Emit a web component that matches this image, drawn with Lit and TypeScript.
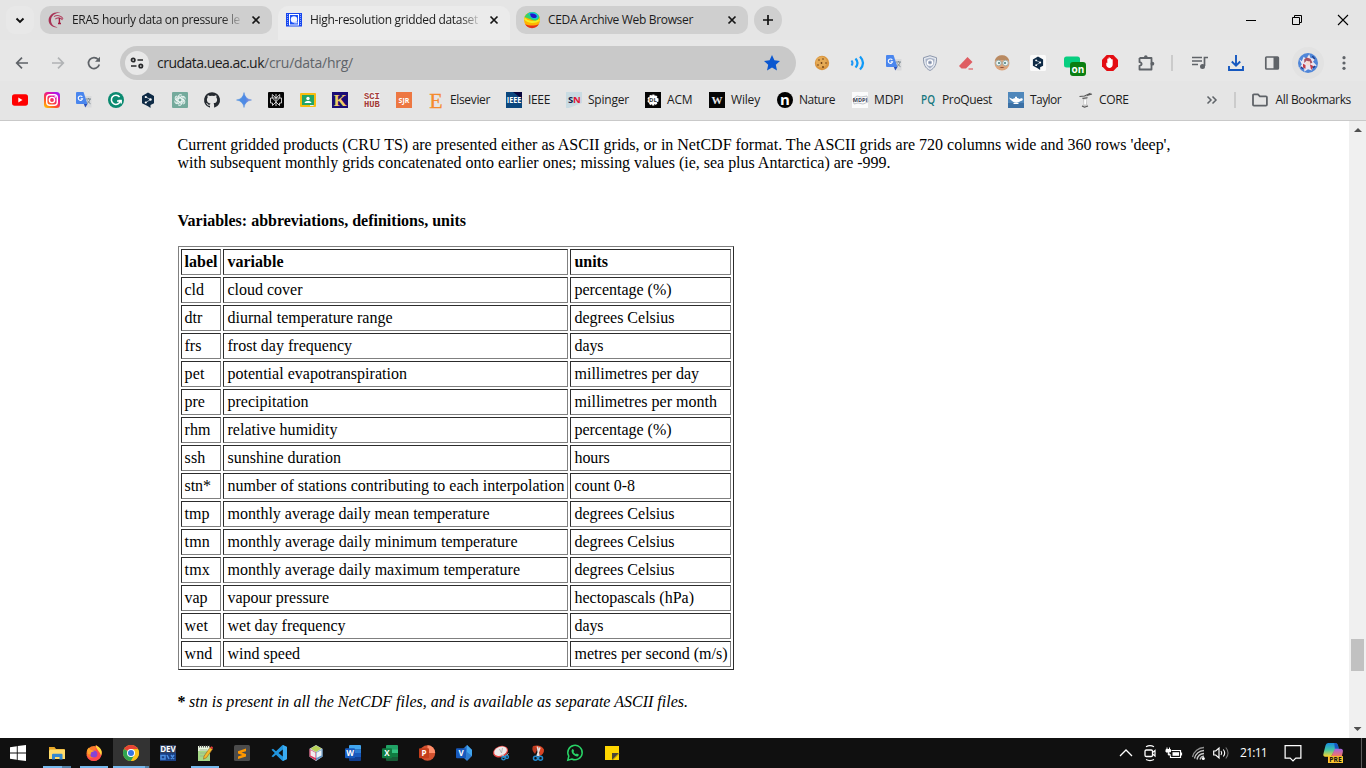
import { LitElement, html, svg, css, TemplateResult } from "lit";
import { customElement, property } from "lit/decorators.js";

type Glyph = TemplateResult;

const letter = (t: string, x: number, y: number, size: number, fill: string, extra = "sans") =>
  svg`<text x=${x} y=${y} font-size=${size} fill=${fill} font-weight="700" text-anchor="middle"
    font-family=${extra === "serif" ? "Liberation Serif, serif" : "Open Sans, sans-serif"}>${t}</text>`;

const translate = svg`<path d="M6 4h9.500v11.500h-5z" fill="#d9dadc"/>
  <path d="M1 0h6.500l4 12H1a1 1 0 0 1-1-1V1a1 1 0 0 1 1-1z" fill="#4a86ee"/><path d="M7.800 12h3.700l-2.200 3.500z" fill="#2a50b8"/>
  <path d="M6.300 4.900A2.200 2.200 0 1 0 6.600 6.700H4.700" fill="none" stroke="#fff" stroke-width="1.100"/>
  <path d="M10 7h5M12.500 6v1M14 7c-.4 2-1.500 3.500-3 4.500M11.500 8.500c.7 1.500 1.700 2.500 3 3.200" fill="none" stroke="#7c8a92" stroke-width="1"/>`;

const hex = svg`<path d="M8 .5l6 3.500v7.200L10.500 13v3L8 14.300 2 11.200V4z" fill="#0f2b46"/>
  <path d="M5.800 5l4.700 2.500-4.700 3M5.800 5v1" fill="none" stroke="#c8d3dc" stroke-width=".8"/>
  <circle cx="5.800" cy="5" r="1.100" fill="#fff"/><circle cx="10.500" cy="7.500" r="1.200" fill="#fff"/><circle cx="5.800" cy="10.500" r="1.100" fill="#fff"/>`;

const office = (l: string, a: string, b: string, c: string, d: string) => svg`
  <path d="M5 0h10a1 1 0 0 1 1 1v3.500H4V1a1 1 0 0 1 1-1z" fill=${a}/><path d="M4 4.200h12V8H4z" fill=${b}/>
  <path d="M4 8h12v4H4z" fill=${c}/><path d="M4 12h12v3a1 1 0 0 1-1 1H5a1 1 0 0 1-1-1z" fill=${d}/>
  <rect x="0" y="3.300" width="10" height="10" rx="1" fill=${c}/>${letter(l, 5, 11.300, 8, "#fff")}`;

const icons: Record<string, Glyph> = {
  chevronDown: svg`<path d="M4.500 6.500L8 10l3.500-3.500" fill="none" stroke="#111" stroke-width="1.900"/>`,
  era: svg`<path d="M12.500 .6C6-.8 .8 3 .6 8c-.1 4 3.400 8 9.400 7.300-4-.3-7-3-7-7C3 4 7 .8 12.500 .6z" fill="#a83355"/>
    <path d="M6 4.600c2.800-2 7.600-1.200 9 2.200M7.300 7.200c1.600-1.800 5.400-2 7.200 .8" fill="none" stroke="#b24562" stroke-width="1.100"/>
    <path d="M11.400 6v5.500M10 11.500h3" fill="none" stroke="#a21c42" stroke-width="1.400"/>`,
  cru: svg`<path d="M0 1h16v13.500H0z" fill="#1746ee"/><path d="M1.500 2v12M14.500 2v12" stroke="#8ca9ff" stroke-width="1" stroke-dasharray="1 1"/>
    <path d="M3 2h10v11.500H3z" fill="#fff"/><path d="M4 3h8v9.500H4z" fill="#1a50f4"/><circle cx="8" cy="7.500" r="3.200" fill="#f4f6ff"/><path d="M9 9.500h2.500v2H8z" fill="#c9d6ff"/>`,
  ceda: svg`<circle cx="8" cy="8" r="8" fill="#ffb400"/><path d="M2 2.800A8 8 0 0 1 15.500 5C14 10 10 9 7 7.500L.5 5z" fill="#36d36a"/>
    <path d="M4 1.500c4-2.500 9-1 10.500 2.500-1 4-4 3.500-7 2z" fill="#12c3df"/><path d="M6 1.800c3-1 6 .2 6.800 2.400-1 3-4 2-6 .3z" fill="#2114c8"/>
    <path d="M1 12c4 2 10 2 14 0A8 8 0 0 1 1 12z" fill="#e5301c"/><path d="M.5 6.500C4 11 11 11 15.500 8" fill="none" stroke="#f5ef21" stroke-width="2"/>`,
  close: svg`<path d="M4.500 4.500l7 7M11.500 4.500l-7 7" stroke="#161616" stroke-width="1.700"/>`,
  plus: svg`<path d="M8 3v10M3 8h10" stroke="#111" stroke-width="1.700"/>`,
  min: svg`<path d="M3 8.500h10" stroke="#000"/>`,
  restore: svg`<path d="M3.500 5.500h7v7h-7zM5.500 5.500v-2h7v7h-2" fill="none" stroke="#000"/>`,
  closeWin: svg`<path d="M3 3l10 10M13 3L3 13" stroke="#000" stroke-width="1.100"/>`,
  back: svg`<path d="M14 8H3M8 2.700L2.700 8 8 13.300" fill="none" stroke="#5f6368" stroke-width="1.700"/>`,
  forward: svg`<path d="M2 8h11M8 2.700L13.300 8 8 13.300" fill="none" stroke="#b1b3b5" stroke-width="1.700"/>`,
  reload: svg`<path d="M13.300 9.500A5.500 5.500 0 1 1 12.200 4.500" fill="none" stroke="#5f6368" stroke-width="1.700"/><path d="M14 1.800v5H9z" fill="#5f6368"/>`,
  tune: svg`<g fill="none" stroke="#27282a" stroke-width="1.700"><circle cx="4.200" cy="5" r="1.700"/><path d="M8.500 5h5.500M2 11h5.500"/><circle cx="11.800" cy="11" r="1.700"/></g>`,
  star: svg`<path d="M8 0l2.400 5.300 5.600.6-4.200 3.900L13 15.500 8 12.600 3 15.500l1.200-5.700L0 5.900l5.600-.6z" fill="#0b57d0"/>`,
  cookie: svg`<circle cx="8" cy="8" r="7.200" fill="#d9953f"/><circle cx="7.300" cy="7" r="5.500" fill="#e5aa55"/><g fill="#6c3d13"><circle cx="5" cy="5" r=".8"/><circle cx="9" cy="4" r=".8"/><circle cx="7.500" cy="8" r=".9"/><circle cx="12" cy="8" r=".8"/><circle cx="4" cy="10" r=".8"/><circle cx="9" cy="12" r=".9"/></g>`,
  sound: svg`<path d="M1.500 5.500q2 2.500 0 5" fill="none" stroke="#2196f3" stroke-width="2"/><path d="M5.500 3.500q4 4.500 0 9M10 1.500q6 6.500 0 13" fill="none" stroke="#109af7" stroke-width="2.200"/>`,
  translate,
  shield: svg`<path d="M8 .7l6.500 2c.3 6-1.500 10.500-6.500 12.800C3 13.200 1.200 8.700 1.500 2.700z" fill="#e4e8ef" stroke="#8d98ad"/><path d="M8 2.700l4.500 1.400c0 4.500-1 7.500-4.500 9.300-3.500-1.800-4.500-4.800-4.500-9.300z" fill="#a9b3c7"/><circle cx="8" cy="7.500" r="2.700" fill="none" stroke="#fff" stroke-width="1.300"/><circle cx="8" cy="7.500" r="1" fill="#7e8ba7"/>`,
  eraser: svg`<path d="M9.500 2L14.500 7 8 13.500H3.500L1 11z" fill="#df5d62"/><path d="M10.500 14h4.500" stroke="#df5d62" stroke-width="1.200"/>`,
  face: svg`<circle cx="8" cy="8" r="7.500" fill="#dca57c"/><path d="M.7 6A7.500 7.500 0 0 1 15.300 6l-2-1H3z" fill="#b98a62"/><circle cx="4.500" cy="8" r="2.800" fill="#e9f4f3" stroke="#8fa3a3" stroke-width=".8"/><circle cx="11.500" cy="8" r="2.800" fill="#e9f4f3" stroke="#8fa3a3" stroke-width=".8"/><circle cx="5" cy="8" r="1" fill="#437b7b"/><circle cx="11" cy="8" r="1" fill="#437b7b"/><path d="M5.500 13q2.500-2 5 0z" fill="#8c4a35"/>`,
  hexBox: svg`<rect width="16" height="16" rx="1.500" fill="#fafafa"/><g transform="translate(1.200 1) scale(.85 .87)">${hex}</g>`,
  hex,
  on: svg`<rect x="-2" y="1.500" width="16" height="11" rx="2.500" fill="#07ce80"/><rect x="4" y="7" width="16" height="14" rx="3" fill="#0a7f12"/>${letter("on", 12, 17.500, 10, "#fff")}`,
  adblock: svg`<path d="M4.700 0h6.600L16 4.700v6.600L11.300 16H4.700L0 11.300V4.700z" fill="#e40d13"/><path d="M4.300 7.500l1 .8V4.200c0-1 1.200-1 1.200 0V3c0-1 1.300-1 1.300 0v.7c0-1 1.300-1 1.300 0v1c.1-.9 1.600-.8 1.600.2v4.600c0 4-5.200 4.600-6.400 1z" fill="#fff"/>`,
  puzzle: svg`<path d="M1.500 3h12v4.500M13.500 9v5.500h-12v-3.700c2.800-.4 2.800-3.200 0-3.600V3M13.500 7v4" fill="none" stroke="#5f6368" stroke-width="1.800" stroke-linejoin="round"/><circle cx="7.800" cy="2" r="1.800" fill="#5f6368"/><circle cx="14.400" cy="8.700" r="1.900" fill="#5f6368"/>`,
  music: svg`<path d="M0 2.500h10M0 6h10M0 9.500h6" stroke="#5f6368" stroke-width="1.600"/><path d="M12.500 11V2.500H16" fill="none" stroke="#5f6368" stroke-width="1.700"/><circle cx="10.500" cy="11.500" r="2.500" fill="#5f6368"/>`,
  download: svg`<path d="M8 0v11M3.800 6.500L8 10.700l4.200-4.200M1 11v4h14v-4" fill="none" stroke="#1558c0" stroke-width="1.900"/>`,
  panel: svg`<rect x="1.800" y="2" width="12.500" height="12" rx=".8" fill="none" stroke="#5f6368" stroke-width="1.700"/><path d="M9.500 2h5v12h-5z" fill="#5f6368"/>`,
  avatar: svg`<circle cx="8" cy="8" r="8" fill="#4f86d8"/><path d="M1 5l2 1.500L4.500 3l2 1.500L9 1l1 3 4 .5-2 2.500 3 3-3 1-1 3-3-1-3 2 0-3-4 0 2-3z" fill="#e9e6f2"/><path d="M5 5l2-1.500 3 1 1.500 3-1.500 1-3-2.500L5 8z" fill="#a8505f"/><path d="M4 8.500l2 1 0 3-2-1zM9.500 9l3 1.500-2 3z" fill="#c43c48"/><path d="M6.500 6.500l3 0 .5 2.500-2 1.200-1.500-1.200z" fill="#f8dbd0"/><path d="M2 11l2 1.500M11.500 2.500l2 2.500M12 12l1.500-1.500" stroke="#20418f" stroke-width="1.200" fill="none"/>`,
  dots: svg`<g fill="#5f6368"><circle cx="8" cy="2.700" r="1.600"/><circle cx="8" cy="8" r="1.600"/><circle cx="8" cy="13.300" r="1.600"/></g>`,
  youtube: svg`<rect y="2.300" width="16" height="11.400" rx="2.600" fill="#f00"/><path d="M6.300 5.600v4.800l4.200-2.400z" fill="#fff"/>`,
  instagram: svg`<defs><linearGradient id="ig" x1="0" y1="1" x2=".7" y2="0"><stop offset="0" stop-color="#ffd400"/><stop offset=".4" stop-color="#ff4d2b"/><stop offset=".75" stop-color="#e9149a"/><stop offset="1" stop-color="#a918f0"/></linearGradient></defs><rect width="16" height="16" rx="3.500" fill="url(#ig)"/><g fill="none" stroke="#fff" stroke-width="1.400"><rect x="2.700" y="2.700" width="10.600" height="10.600" rx="3"/><circle cx="8" cy="8" r="2.600"/></g><circle cx="11.200" cy="4.900" r=".8" fill="#fff"/>`,
  grammarly: svg`<circle cx="8" cy="8" r="8" fill="#0a8a70"/><path d="M11.600 5A4.600 4.600 0 1 0 12.400 9H9" fill="none" stroke="#fff" stroke-width="1.600"/><path d="M10.500 8.500h2.700v3" fill="none" stroke="#fff" stroke-width="1.400"/>`,
  gpt: svg`<rect width="16" height="16" rx="1" fill="#74aa9c"/><g fill="none" stroke="#edf6f4" stroke-width=".95">${[0, 60, 120, 180, 240, 300].map((a) => svg`<path transform=${`rotate(${a} 8 8)`} d="M6 9V4.800a2.300 2.300 0 0 1 4-1.500M6 6.800L9.500 4.700 12 6.100"/>`)}</g>`,
  github: svg`<path d="M8 .2a7.900 7.900 0 0 0-2.500 15.400c.4.100.5-.2.500-.4v-1.500c-2.200.5-2.700-.9-2.700-.9-.4-.9-.9-1.200-.9-1.200-.7-.5.100-.5.100-.5.800.1 1.200.8 1.200.8.700 1.200 1.900.9 2.300.7.100-.5.300-.9.500-1.100-1.800-.2-3.600-.9-3.600-3.900 0-.9.300-1.600.8-2.200-.1-.2-.4-1 .1-2.100 0 0 .7-.2 2.200.8a7.600 7.600 0 0 1 4 0c1.500-1 2.200-.8 2.200-.8.500 1.100.2 1.900.1 2.100.5.600.8 1.300.8 2.200 0 3-1.800 3.700-3.600 3.900.3.300.6.800.6 1.500v2.200c0 .2.100.5.500.4A7.900 7.900 0 0 0 8 .2z" fill="#24292f"/>`,
  gemini: svg`<defs><linearGradient id="gm" x1="0" y1="0" x2="1" y2="0"><stop offset="0" stop-color="#4a94de"/><stop offset=".6" stop-color="#5088e6"/><stop offset="1" stop-color="#a787cf"/></linearGradient></defs><path d="M8 .5Q9 7 15.500 8 9 9 8 15.500 7 9 .5 8 7 7 8 .5z" fill="url(#gm)" stroke="#4e8de0" stroke-width=".5"/>`,
  perplexity: svg`<rect width="16" height="16" rx="1" fill="#050505"/><path d="M8 2v12M4.300 2.500V6L8 9.500l3.700-3.500V2.500L8 6 4.300 2.500M2.500 6h11v5h-2v2.500L8 10l-3.500 3.500V11h-2z" fill="none" stroke="#ddd" stroke-width=".9"/>`,
  classroom: svg`<rect y="1" width="16" height="14" rx="1" fill="#f7bd10"/><rect x="2" y="3" width="12" height="10" fill="#23a567"/><circle cx="8" cy="6.500" r="1.700" fill="#fff"/><path d="M4.500 11c.5-2.600 6.500-2.600 7 0z" fill="#fff"/><path d="M10 13h3.500v1H10z" fill="#eee"/>`,
  k: svg`<rect width="16" height="16" fill="#1b0d76"/>${letter("K", 8, 14, 17, "#efce67", "serif")}`,
  scihub: svg`<rect width="16" height="16" fill="#f1efef"/><g font-family="Liberation Mono, monospace" font-weight="700" font-size="8.800" fill="#a33a37"><text x="0" y="6.700">SCI</text><text x="0" y="15.200">HUB</text></g>`,
  sjr: svg`<rect width="16" height="16" fill="#ed7742"/>${letter("SJR", 8, 11, 7, "#fff")}`,
  elsevier: svg`<text x="8" y="15.500" text-anchor="middle" font-family="Liberation Serif, serif" font-size="22" fill="#f58a2d" stroke="#f58a2d" stroke-width=".3">E</text>`,
  ieee: svg`<rect width="16" height="16" fill="#0b477e"/><path d="M7 0h9v7z" fill="#06063e"/><text x="8" y="11.300" textLength="14.500" lengthAdjust="spacingAndGlyphs" text-anchor="middle" font-family="Open Sans, sans-serif" font-weight="700" font-size="9.500" fill="#fff">IEEE</text>`,
  sn: svg`<path d="M0 0h16v11L3 16H0z" fill="#c9dbe2"/>${letter("S", 4.500, 10.500, 9.500, "#10244d")}${letter("N", 10.800, 10.500, 9.500, "#e01436")}`,
  acm: svg`<rect width="16" height="16" fill="#050505"/><circle cx="8" cy="8" r="4.700" fill="#fff" stroke="#fff" stroke-width="1.700" stroke-dasharray="2 1"/>${letter("DL", 8, 10.200, 6, "#333")}`,
  wiley: svg`<rect width="16" height="16" fill="#050505"/>${letter("W", 8, 12, 11, "#e8e8e8", "serif")}`,
  nature: svg`<circle cx="8" cy="8" r="8" fill="#020202"/>${letter("n", 8, 12.500, 15, "#fff")}`,
  mdpi: svg`<rect width="16" height="16" fill="#fbfbfb"/><path d="M1 7l4-3 4 1 6-1 1 6-5 2-5-1-4 1z" fill="none" stroke="#aab0b8" stroke-width=".7"/>${letter("MDPI", 8, 10, 5.500, "#374052")}`,
  pq: svg`<text x="8" y="12.300" text-anchor="middle" textLength="14" lengthAdjust="spacingAndGlyphs" font-family="Open Sans, sans-serif" font-size="12" font-weight="600" fill="#16777f">PQ</text>`,
  taylor: svg`<rect width="16" height="16" fill="#4f87bb"/><path d="M0 11h16v5H0z" fill="#3b70a5"/><path d="M1 5.500l3.500 1.500c2-1.300 5.500-1.300 7 0 2-1.500 4-.5 3 1.200-1 1-2 .6-3 1.500-2 1.500-5 1.500-6.500 0C4 8.500 2.500 8.500 1 5.500zM7 4.800h2v1.200H7zM5.500 11h5v1h-5z" fill="#fff"/>`,
  core: svg`<path d="M5 5l5-1 1 1.500-1.500 1.500L10 12l1 2-3 1.500-3-1.500 1.500-2L6 8z" fill="#c8c8c8"/><path d="M2.500 4.500l5-.5 6-2.700M10 3.500l5-1.500M5.500 6.500l5-.7M5 14l2.500 1.200L11 14" stroke="#555" stroke-width="1.100" fill="none"/><path d="M7.200 7.500h1.800v5H7.200z" fill="#fff"/>`,
  more: svg`<path d="M3.500 4.500L7 8l-3.500 3.500M8.500 4.500L12 8l-3.500 3.500" fill="none" stroke="#5f6368" stroke-width="1.500"/>`,
  folder: svg`<path d="M1 3.200q0-.9.900-.9h4l2 2h6q1 0 1 .9v7.500q0 .9-1 .9h-12q-.9 0-.9-.9z" fill="none" stroke="#5f6368" stroke-width="1.800"/>`,
  windows: svg`<path d="M0 2.200L6.800 1.200V7.500H0zM7.700 1.100L16 0v7.500H7.700zM0 8.400h6.800v6.400L0 13.800zM7.700 8.400H16V16l-8.300-1.100z" fill="#fff"/>`,
  explorer: svg`<path d="M0 2h5.500l1.500 2H15l1 1v9H0z" fill="#e9a626"/><path d="M1 4.500h15V14H0V6z" fill="#ffdc6b"/><path d="M3 14.500V9.700q0-1 1-1h8.500q1 0 1 1v4.800h-3v-2.500h-4.500v2.500z" fill="#3488cf"/>`,
  firefox: svg`<circle cx="8" cy="8.500" r="7.500" fill="#ff7a2b"/><path d="M10 0c3 2 6 4.500 5.500 9 0 4-4 7-7.500 7-4.500 0-7.500-3-7.500-7 1 3 3 4 5 4 5 0 6.500-4 4-7.500z" fill="#ff4850"/><path d="M9.500 .3c5.500 2.500 7.500 6 5.500 10.500C14.500 7 11 6 9.500 .3z" fill="#ffdc3c"/><circle cx="7.800" cy="9" r="3.600" fill="#8544d7"/><path d="M1 5l2-2.500 1.500 2.200 4 1.300-2.500 1c-1 0-1.500 1-1 2.500L2 9z" fill="#ffa52c"/>`,
  chrome: svg`<circle cx="8" cy="8" r="8" fill="#fbc21b"/><path d="M8 8L1.070 4A8 8 0 0 1 14.930 4z" fill="#e74335"/><path d="M1.070 4A8 8 0 0 0 8 16l3.500-6L8 8z" fill="#31a350"/><path d="M8 4h6.930A8 8 0 0 1 8 16l3.500-6z" fill="#fbc21b"/><circle cx="8" cy="8" r="4" fill="#fff"/><circle cx="8" cy="8" r="3" fill="#3575e2"/>`,
  dev: svg`<rect width="16" height="8" fill="#30405f"/><rect y="8" width="16" height="8" fill="#193f83"/><text x="8" y="7.300" text-anchor="middle" font-family="Open Sans, sans-serif" font-size="8" font-weight="700" fill="#fff">DEV</text><path d="M1 10.500h4v3.500H1zM7 10l2 4M11 10l3 4M14 10l-3 4" stroke="#4b8de0" stroke-width="1.500" fill="none"/>`,
  notepad: svg`<path d="M1 1h12v15H1z" fill="#e9f5df"/><path d="M1 6h12v10H1z" fill="#a5d886"/><path d="M2 1.500h11" stroke="#555" stroke-width="2" stroke-dasharray="1 1"/><path d="M2.500 5h8M3 8h6M3 11h5" stroke="#9ab58f"/><path d="M13 2.500l2.500 1.700-6 8.500-3 1.500.5-3z" fill="#f5bb2b" stroke="#895f23" stroke-width=".6"/><path d="M13 2.500l2.500 1.700.5-2-1.500-1z" fill="#df3939"/>`,
  sublime: svg`<rect width="16" height="16" rx="1.500" fill="#4b4b4b"/><path d="M4 6.200L12 3.500v2.700L7.500 7.600 12 9v2.500L4 14v-2.600L8.300 10 4 8.600z" fill="#ff9800"/>`,
  vscode: svg`<path d="M11.500 0L16 2v12l-4.500 2L5 9.800 2 12.200.5 11.300 3.800 8 .5 4.700 2 3.800l3 2.400zM11.800 4.500L7.500 8l4.300 3.500z" fill="#2196df"/><path d="M12 0L16 2v12l-4 2z" fill="#39abf1"/>`,
  cube: svg`<path d="M8 0l6.500 3.700v8L8 16l-6.500-4.300v-8z" fill="#c7d9e8"/><path d="M8 .5l5.500 3L8 7 2.500 3.500z" fill="#b7d257"/><path d="M1.500 4L8 7.500V15.500L1.500 11.500z" fill="#d9365b"/><path d="M14.500 4L8 7.500v8l6.500-4z" fill="#5c91c3"/><path d="M2.500 5l5 2.700V13l-5-2.500z" fill="#f0edf0"/><path d="M8.500 7.700l5-2.700v5.500l-5 2.500z" fill="#eef4f9"/>`,
  word: office("W", "#41a5ee", "#2b7cd3", "#185abd", "#103f91"),
  excel: office("X", "#21a366", "#33c481", "#107c41", "#185c37"),
  ppt: svg`<circle cx="8.500" cy="8" r="7.700" fill="#d35230"/><path d="M8.500 .3a7.700 7.700 0 0 1 7.700 7.700H8.500z" fill="#ff8f6b"/><rect y="3.300" width="10" height="10" rx="1" fill="#c43e1c"/>${letter("P", 5, 11.300, 8, "#fff")}`,
  visio: svg`<path d="M11 0l5 5v6l-5 5-5-5V5z" fill="#2f7dd1"/><path d="M11 0l5 5v6L11 7z" fill="#41a5ee"/><rect y="3.300" width="10" height="10" rx="1" fill="#185abd"/>${letter("V", 5, 11.300, 8, "#fff")}`,
  snipRed: svg`<ellipse cx="7.500" cy="6.500" rx="7.800" ry="5.500" transform="rotate(-20 8 6.500)" fill="#e64644"/><ellipse cx="7.500" cy="6" rx="6.600" ry="4.400" transform="rotate(-20 8 6)" fill="#eee9e9"/><path d="M6.500 4l2 4M9.500 3l-1 5" stroke="#aaa" stroke-width=".8"/><path d="M8.500 9.500l4 2.500M15.500 8.500l-5 4" stroke="#ccc"/><g fill="none" stroke="#268fd2" stroke-width="1.300"><circle cx="10.500" cy="13.200" r="1.700"/><circle cx="14" cy="12" r="1.500"/></g>`,
  snip: svg`<path d="M3 1q8-2 11 3.500 .5 5-6 7.500 2-4 1-6z" fill="#d84423"/><path d="M3 1q3 0 4 4L5 9Q1 5 3 1z" fill="#b93a1f"/><path d="M7.500 1.500L8.800 11M10 2.500L7 11" stroke="#e2e2e2" stroke-width="1.600"/><g fill="none" stroke="#238bce" stroke-width="1.500"><circle cx="5.500" cy="13.200" r="2"/><circle cx="10.500" cy="13.200" r="2"/></g>`,
  whatsapp: svg`<path d="M.8 15.200l1-4A7.200 7.200 0 1 1 4.800 14z" fill="#111" stroke="#29d366" stroke-width="1.500"/><path d="M5 4.500q1-1 1.500.2l.6 1.300-.7 1q.8 1.600 2.500 2.300l.9-.9 2 1c-.3 3-3 2.300-5 .7S4 6 5 4.500z" fill="#29d366"/>`,
  sticky: svg`<path d="M1 1h14v7.500H8.500V15H1z" fill="#ffd600"/><path d="M8 8h7L8 15z" fill="#4a4638"/><path d="M15 8v7H8z" fill="#ffd600"/><path d="M15 8.500L8.500 15" stroke="#a78a0c"/>`,
  up: svg`<path d="M2 11l6-6 6 6" fill="none" stroke="#fff" stroke-width="1.300"/>`,
  meet: svg`<path d="M4 1.800Q8-.6 12 1.800M4 14.600q4 2 8 0" fill="none" stroke="#fff" stroke-width="1.100"/><rect x="3" y="5" width="7.500" height="6.500" rx="1.300" fill="none" stroke="#fff" stroke-width="1.300"/><path d="M10.500 7.500L13 5.500v5.500l-2.500-2" fill="none" stroke="#fff" stroke-width="1.200"/>`,
  battery: svg`<path d="M5.500 5.500h9v7H4.500v-2M15.500 7.500v3" fill="none" stroke="#fff" stroke-width="1.200"/><path d="M6.500 7.200h6.500v3.600H6.500z" fill="#fff"/><path d="M0 4.500h4.500v2.500h-4.500zM1 2.500v2.500M3.500 2.500v2.500M2.300 7v3h2.500" fill="#fff" stroke="#fff" stroke-width="1"/>`,
  wifi: svg`<g fill="none" stroke="#c9c9c9" stroke-width="1.300"><path d="M1.500 12A12 12 0 0 1 13 2.500" stroke="#8f8f8f"/><path d="M3.500 13.500A10 10 0 0 1 13 5.500M6 14.500A7.500 7.500 0 0 1 13 8.500M9 14.500A4.500 4.500 0 0 1 13 11.200"/></g><circle cx="12.300" cy="13.500" r="1.500" fill="#fff"/>`,
  volume: svg`<path d="M.7 6h2L6 3v10L2.700 10h-2z" fill="none" stroke="#fff" stroke-width="1.200"/><path d="M8 6q1.500 2 0 4M10.300 4.500q2.800 3.500 0 7" fill="none" stroke="#fff" stroke-width="1.100"/><path d="M12.800 2.500q4.500 5.500 0 11" fill="none" stroke="#777" stroke-width="1.100"/>`,
  note: svg`<path d="M1 1.500h14v11H10.500L8 15 5.500 12.500H1z" fill="none" stroke="#fff" stroke-width="1.100"/>`,
  copilot: svg`<defs><linearGradient id="cp" x1="0" y1="0" x2="0" y2="1"><stop offset="0" stop-color="#168de0"/><stop offset=".5" stop-color="#45c6a4"/><stop offset="1" stop-color="#ffd62b"/></linearGradient><linearGradient id="cq" x1="0" y1="0" x2="0" y2="1"><stop offset="0" stop-color="#9e62e8"/><stop offset="1" stop-color="#ff7854"/></linearGradient></defs><path d="M4 0h6q1.500 0 2 2l.5 2.500H10L6.500 11H2Q-.5 11 .5 8L2 2q.5-2 2-2z" fill="url(#cp)"/><path d="M9 0h1q1.500 0 2 2l.6 2.500H9.500z" fill="#1657c4"/><path d="M9.500 4.500H14q2.500 0 1.800 3L15 11H6.500z" fill="url(#cq)"/><rect x="4" y="10.500" width="12" height="5.500" fill="#fdc52d"/><text x="10" y="15.200" text-anchor="middle" font-family="Open Sans, sans-serif" font-weight="700" font-size="5.400" fill="#111">PRE</text>`,
};

const icon = (name: string, cls = "") =>
  html`<svg class="icon ${cls}" viewBox="0 0 16 16">${icons[name]}</svg>`;

/** A run of text tracked in or out so that it fills the given width. */
@customElement("fitted-text")
class FittedText extends LitElement {
  @property({ type: Number }) width = 0;
  @property() text = "";
  static styles = css`
    :host { display: inline-block; white-space: pre; }
  `;
  render() {
    return html`<span>${this.text}</span>`;
  }
  updated() {
    const span = this.renderRoot.querySelector("span")!;
    span.style.letterSpacing = "0px";
    const natural = span.getBoundingClientRect().width;
    span.style.letterSpacing = `${(this.width - natural) / this.text.length}px`;
  }
}

const fit = (text: string, width: number, cls = "") =>
  html`<fitted-text class=${cls} .text=${text} .width=${width}></fitted-text>`;

const quick = ["youtube", "instagram", "translate", "grammarly", "hex", "gpt", "github", "gemini", "perplexity", "classroom", "k", "scihub", "sjr"];
/* icon, label, label width, full slot width */
const bookmarks: [string, string, number, number][] = [
  ["elsevier", "Elsevier", 40, 78], ["ieee", "IEEE", 22, 60], ["sn", "Spinger", 41, 79], ["acm", "ACM", 25.500, 64],
  ["wiley", "Wiley", 29, 68], ["nature", "Nature", 36, 75], ["mdpi", "MDPI", 29.500, 68], ["pq", "ProQuest", 50, 88],
  ["taylor", "Taylor", 31, 69], ["core", "CORE", 29.500, 60],
];
const extensions = ["cookie", "sound", "translate", "shield", "eraser", "face", "hexBox", "on", "adblock", "puzzle"];
/* icon, state */
const apps: [string, string][] = [
  ["explorer", "open multi"], ["firefox", "open"], ["chrome", "open active"], ["dev", ""], ["notepad", "open"], ["sublime", ""],
  ["vscode", ""], ["cube", ""], ["word", ""], ["excel", ""], ["ppt", ""], ["visio", ""], ["snipRed", ""], ["snip", ""], ["whatsapp", ""], ["sticky", ""],
];
/* label, variable, variable width, units, units width */
const rows: [string, number, string, number, string, number][] = [
  ["cld", 19.500, "cloud cover", 75, "percentage (%)", 97],
  ["dtr", 18, "diurnal temperature range", 165, "degrees Celsius", 100],
  ["frs", 17, "frost day frequency", 124.500, "days", 29],
  ["pet", 20, "potential evapotranspiration", 179.500, "millimetres per day", 124.500],
  ["pre", 20.500, "precipitation", 81, "millimetres per month", 142.500],
  ["rhm", 26, "relative humidity", 110, "percentage (%)", 97],
  ["ssh", 21, "sunshine duration", 113.500, "hours", 35],
  ["stn*", 26.500, "number of stations contributing to each interpolation", 337, "count 0-8", 60.500],
  ["tmp", 25, "monthly average daily mean temperature", 262, "degrees Celsius", 100],
  ["tmn", 25.500, "monthly average daily minimum temperature", 290, "degrees Celsius", 100],
  ["tmx", 25.500, "monthly average daily maximum temperature", 292.500, "degrees Celsius", 100],
  ["vap", 23, "vapour pressure", 101.500, "hectopascals (hPa)", 119.500],
  ["wet", 23.500, "wet day frequency", 118, "days", 29],
  ["wnd", 28, "wind speed", 72.500, "metres per second (m/s)", 153],
];

@customElement("app-root")
class AppRoot extends LitElement {
  static styles = css`
    :host { display: flex; flex-direction: column; width: 1366px; height: 768px; overflow: hidden; background: #fff; }
    * { box-sizing: border-box; }
    .icon { width: 16px; height: 16px; flex: none; display: block; overflow: visible; }
    .ui { font: 12px/16px "Open Sans", "Noto Sans", sans-serif; color: #1c1c1c; }
    .strip { height: 40px; flex: none; background: #e5e5e5; display: flex; align-items: flex-start; padding: 6px 0 0 6px; }
    .search { width: 28px; height: 28px; border-radius: 9px; background: #e8e8e8; display: grid; place-items: center; margin-right: 6px; }
    .tab { width: 232px; height: 28px; border-radius: 10px; background: #cfcfcf; display: flex; align-items: center; padding: 0 8px; margin-right: 6px; flex: none; }
    .tab.active { background: #ebebeb; height: 34px; padding-bottom: 6px; border-radius: 10px 10px 0 0; }
    .title { margin-left: 8px; width: 168px; white-space: nowrap; height: 16px; }
    .title.fade { mask-image: linear-gradient(90deg, #000 150px, transparent 172px); }
    .tab .icon.x { margin-left: 8px; }
    .add { width: 28px; height: 28px; border-radius: 14px; background: #cfcfcf; display: grid; place-items: center; }
    .window { margin-left: auto; display: flex; height: 28px; align-items: center; }
    .window > * { margin: 0 15px; }
    .toolbar { height: 41px; flex: none; background: #e7e7e7; display: flex; align-items: center; padding: 4px 0 0 4px; }
    .slot { width: 36px; flex: none; display: grid; place-items: center; height: 36px; }
    .address { width: 676px; height: 34px; border-radius: 17px; background: #c9c9c9; margin: 0 8px; display: flex; align-items: center; padding: 0 16px 0 5px; font-size: 14px; line-height: 18px; }
    .site { width: 24px; height: 24px; border-radius: 12px; background: #e8e8e8; display: grid; place-items: center; margin-right: 8px; }
    .path { color: #606469; }
    .address .icon.fav { margin-left: auto; }
    .rule { width: 2px; height: 16px; background: #cbcbcb; margin: 0 9px 0 7px; flex: none; }
    .face { width: 32px; height: 32px; border-radius: 16px; background: #e2e2e2; display: grid; place-items: center; }
    .icon.big { width: 20px; height: 20px; }
    .marks { height: 40px; flex: none; background: #e5e5e5; border-bottom: 1px solid #c9c9c9; display: flex; align-items: center; padding: 0 15px 2px 12px; }
    .quick { width: 32px; flex: none; }
    .mark { display: flex; gap: 6px; align-items: center; flex: none; }
    .all { display: flex; align-items: center; margin-left: auto; }
    .all .rule { margin: 0 16px 0 14px; }
    .all .label { margin-left: 8px; }
    .page { flex: 1; display: flex; min-height: 0; font: 16px/18px "Liberation Serif", "Times New Roman", serif; color: #000; }
    .doc { flex: 1; padding: 15px 0 0 177.500px; }
    p { margin: 0; height: 18px; white-space: nowrap; }
    .bold { font-weight: 700; }
    .heading { margin-top: 40px; }
    table { margin: 16px 0 0 .5px; width: 556px; table-layout: fixed; border-collapse: separate; border-spacing: 2px; border: 1px solid; border-color: #808080 #2c2c2c #2c2c2c #808080; }
    td { height: 26px; padding: 0 0 0 3.500px; border: 1px solid; border-color: #2c2c2c #808080 #808080 #2c2c2c; white-space: nowrap; vertical-align: middle; line-height: 18px; }
    td:first-child { padding-left: 2.500px; }
    td > fitted-text { display: block; height: 18px; }
    .c1 { width: 40px; } .c2 { width: 345px; } .c3 { width: 161px; }
    .foot { margin-top: 23px; }
    .em { font-style: italic; }
    .scroll { width: 17px; background: #f0f0f0; display: flex; flex-direction: column; align-items: center; padding: 7px 0; }
    .thumb { width: 13px; height: 32px; background: #c1c1c1; margin-top: auto; margin-bottom: 56px; }
    .arrow { width: 8px; height: 4px; background: #505050; clip-path: polygon(0 0, 100% 0, 50% 100%); }
    .arrow.top { transform: rotate(180deg); }
    .task { height: 30px; flex: none; background: #101010; display: flex; align-items: stretch; }
    .start { width: 38.500px; display: grid; place-items: center; padding-right: 3px; }
    .app { width: 37px; display: grid; place-items: center; flex: none; }
    .app.open { background: linear-gradient(#76b9ed, #76b9ed) 50% 100% / 28px 2px no-repeat; }
    .app.multi { background: linear-gradient(90deg, #76b9ed 68%, #5282a8 68%) 50% 100% / 28px 2px no-repeat; }
    .app.active { background: linear-gradient(90deg, #76b9ed 88%, #5282a8 88%) 0 100% / 36px 2px no-repeat, #333; }
    .tray { margin-left: auto; display: flex; align-items: center; color: #fff; font-size: 12px; }
    .tray .time { margin: 0 17px 0 11px; }
    .tray .up { margin-right: 8px; width: 16px; }
    .tray .sp { margin-right: 8px; }
    .tray .bt { margin-right: 9px; }
    .tray .wf { margin-right: 6px; }
    .tray .nt { margin-right: 21px; width: 18px; height: 18px; }
    .edge { width: 1px; align-self: stretch; background: #5b5b5b; margin: 0 4px 0 18px; }
  `;

  render() {
    return html`
      <div class="strip ui">
        <div class="search">${icon("chevronDown")}</div>
        <div class="tab">${icon("era")}<div class="title fade">${fit("ERA5 hourly data on pressure le", 168)}</div>${icon("close", "x")}</div>
        <div class="tab active">${icon("cru")}<div class="title fade">${fit("High-resolution gridded dataset", 168)}</div>${icon("close", "x")}</div>
        <div class="tab">${icon("ceda")}<div class="title">${fit("CEDA Archive Web Browser", 145)}</div>${icon("close", "x")}</div>
        <div class="add">${icon("plus")}</div>
        <div class="window">${icon("min")}${icon("restore")}${icon("closeWin")}</div>
      </div>
      <div class="toolbar ui">
        <div class="slot">${icon("back")}</div><div class="slot">${icon("forward")}</div><div class="slot">${icon("reload")}</div>
        <div class="address">
          <div class="site">${icon("tune")}</div>
          ${fit("crudata.uea.ac.uk", 107)}${fit("/cru/data/hrg/", 89, "path")}${icon("star", "fav")}
        </div>
        ${extensions.map((e) => html`<div class="slot">${icon(e)}</div>`)}
        <div class="rule"></div>
        <div class="slot">${icon("music")}</div><div class="slot">${icon("download")}</div><div class="slot">${icon("panel")}</div>
        <div class="slot"><div class="face">${icon("avatar", "big")}</div></div><div class="slot">${icon("dots")}</div>
      </div>
      <div class="marks ui">
        ${quick.map((q) => html`<div class="quick">${icon(q)}</div>`)}
        ${bookmarks.map(([i, t, w, slot]) => html`<div class="mark" style="width:${slot}px">${icon(i)}${fit(t, w)}</div>`)}
        <div class="all">${icon("more")}<div class="rule"></div>${icon("folder")}${fit("All Bookmarks", 75.500, "label")}</div>
      </div>
      <div class="page">
        <div class="doc">
          <p>${fit("Current gridded products (CRU TS) are presented either as ASCII grids, or in NetCDF format. The ASCII grids are 720 columns wide and 360 rows 'deep',", 993)}</p>
          <p>${fit("with subsequent monthly grids concatenated onto earlier ones; missing values (ie, sea plus Antarctica) are -999.", 713)}</p>
          <p class="heading bold">${fit("Variables: abbreviations, definitions, units", 288.500)}</p>
          <table>
            <tr class="bold"><td class="c1">${fit("label", 33)}</td><td class="c2">${fit("variable", 56)}</td><td class="c3">${fit("units", 33.500)}</td></tr>
            ${rows.map(([a, aw, b, bw, c, cw]) => html`<tr><td>${fit(a, aw)}</td><td>${fit(b, bw)}</td><td>${fit(c, cw)}</td></tr>`)}
          </table>
          <p class="foot"><span class="bold">${fit("* ", 11.500)}</span><span class="em">${fit("stn is present in all the NetCDF files, and is available as separate ASCII files.", 499)}</span></p>
        </div>
        <div class="scroll"><div class="arrow top"></div><div class="thumb"></div><div class="arrow"></div></div>
      </div>
      <div class="task ui">
        <div class="start">${icon("windows")}</div>
        ${apps.map(([i, s]) => html`<div class="app ${s}">${icon(i)}</div>`)}
        <div class="tray">
          ${icon("up", "up")}${icon("meet", "sp")}${icon("battery", "bt")}${icon("wifi", "wf")}${icon("volume")}
          ${fit("21:11", 27, "time")}${icon("note", "nt")}${icon("copilot", "big")}
          <div class="edge"></div>
        </div>
      </div>
    `;
  }
}
